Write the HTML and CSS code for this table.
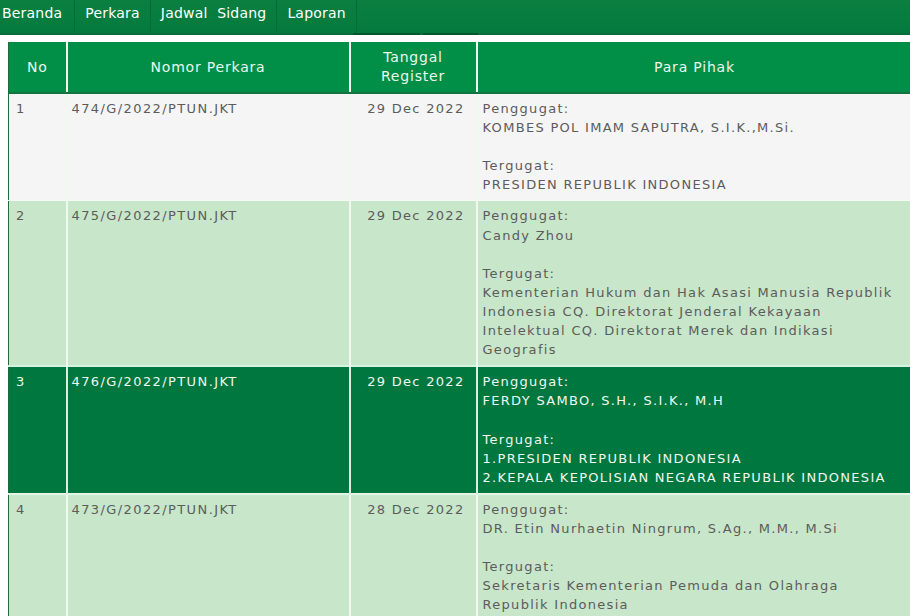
FILE: index.html
```html
<!DOCTYPE html>
<html lang="id">
<head>
<meta charset="utf-8">
<title>Daftar Perkara</title>
<link rel="stylesheet" href="styles.css">
</head>
<body>
<nav class="topnav">
  <ul class="menu">
    <li class="menu-item">Beranda</li>
    <li class="menu-item">Perkara</li>
    <li class="menu-item">Jadwal Sidang</li>
    <li class="menu-item">Laporan</li>
  </ul>
  <div class="subtabs">
    <span class="subtab subtab-a"></span>
    <span class="subtab subtab-b"></span>
  </div>
</nav>
<div class="wrap">
<table class="cases">
  <colgroup>
    <col class="c-no"><col class="c-nomor"><col class="c-tgl"><col class="c-pihak">
  </colgroup>
  <thead>
    <tr>
      <th>No</th>
      <th>Nomor Perkara</th>
      <th>Tanggal<br>Register</th>
      <th>Para Pihak</th>
    </tr>
  </thead>
  <tbody>
    <tr class="row-light">
      <td>1</td>
      <td class="nomor">474/G/2022/PTUN.JKT</td>
      <td class="date">29 Dec 2022</td>
      <td class="pihak">Penggugat:<br>KOMBES POL IMAM SAPUTRA, S.I.K.,M.Si.<br><br>Tergugat:<br>PRESIDEN REPUBLIK INDONESIA</td>
    </tr>
    <tr class="row-green">
      <td>2</td>
      <td class="nomor">475/G/2022/PTUN.JKT</td>
      <td class="date">29 Dec 2022</td>
      <td class="pihak">Penggugat:<br>Candy Zhou<br><br>Tergugat:<br>Kementerian Hukum dan Hak Asasi Manusia Republik Indonesia CQ. Direktorat Jenderal Kekayaan Intelektual CQ. Direktorat Merek dan Indikasi Geografis</td>
    </tr>
    <tr class="row-active">
      <td>3</td>
      <td class="nomor">476/G/2022/PTUN.JKT</td>
      <td class="date">29 Dec 2022</td>
      <td class="pihak">Penggugat:<br>FERDY SAMBO, S.H., S.I.K., M.H<br><br>Tergugat:<br>1.PRESIDEN REPUBLIK INDONESIA<br>2.KEPALA KEPOLISIAN NEGARA REPUBLIK INDONESIA</td>
    </tr>
    <tr class="row-green">
      <td>4</td>
      <td class="nomor">473/G/2022/PTUN.JKT</td>
      <td class="date">28 Dec 2022</td>
      <td class="pihak">Penggugat:<br>DR. Etin Nurhaetin Ningrum, S.Ag., M.M., M.Si<br><br>Tergugat:<br>Sekretaris Kementerian Pemuda dan Olahraga Republik Indonesia</td>
    </tr>
  </tbody>
</table>
</div>
</body>
</html>
```
FILE: styles.css
```css
html, body {
  margin: 0;
  padding: 0;
  background: #ffffff;
  overflow: hidden;
}
body {
  width: 910px;
  height: 616px;
  font-family: "DejaVu Sans", "Open Sans", sans-serif;
  letter-spacing: 1.3px;
}
.topnav {
  background: linear-gradient(to bottom, #0a7f40 0%, #037a3d 100%);
  height: 35px;
  display: flex;
  flex-direction: column;
}
.menu {
  list-style: none;
  margin: 0;
  padding: 0;
  display: flex;
  height: 33px;
}
.menu-item {
  color: #ffffff;
  font-size: 14px;
  letter-spacing: 0.2px;
  word-spacing: 5px;
  line-height: 26px;
  padding: 0 10px;
  border-right: 1px solid #066a34;
}
.menu-item:first-child {
  padding-left: 2px;
  padding-right: 12px;
}
.subtabs {
  display: flex;
  height: 2px;
  background: #0b6e3a;
  padding-left: 353px;
  gap: 3px;
}
.subtab {
  height: 2px;
  background: #05562b;
}
.subtab-a { width: 67px; }
.subtab-b { width: 55px; }

.wrap {
  padding: 7px 0 0 8px;
}
.cases {
  border-collapse: collapse;
  table-layout: fixed;
  width: 903px;
  border-left: 1px solid #1f6b3a;
  font-size: 13px;
  line-height: 19.1px;
}
.c-no { width: 58px; }
.c-nomor { width: 283px; }
.c-tgl { width: 127px; }
.c-pihak { width: 435px; }

.cases th {
  background: #018f48;
  color: #eaf7ee;
  font-weight: normal;
  font-size: 14px;
  letter-spacing: 0.8px;
  line-height: 19px;
  height: 50px;
  padding: 0 4px;
  text-align: center;
  border-left: 2px solid #f2faf4;
  border-bottom: 2px solid #14733f;
}
.cases th:first-child,
.cases td:first-child {
  border-left: 0;
}
.cases td {
  vertical-align: top;
  padding: 5px 6px 6px 7px;
  border-left: 2px solid #f1f8f1;
  border-top: 1px solid #f4fbf5;
  color: #5c5c5c;
}
.cases td.nomor {
  padding-left: 4px;
  letter-spacing: 1.4px;
}
.cases td.date {
  text-align: right;
  padding-right: 11px;
}
.cases td.pihak {
  padding-left: 5px;
  padding-right: 14px;
}
.row-light td {
  background: #f5f5f5;
}
.row-green td {
  background: #c8e6c9;
}
.row-active td {
  background: #00773f;
  color: #eef7f0;
  border-top: 2px solid #d4f3e0;
  border-left-color: #d9efe0;
}
.row-active + .row-green td {
  border-top: 2px solid #e4f4e6;
}
```
